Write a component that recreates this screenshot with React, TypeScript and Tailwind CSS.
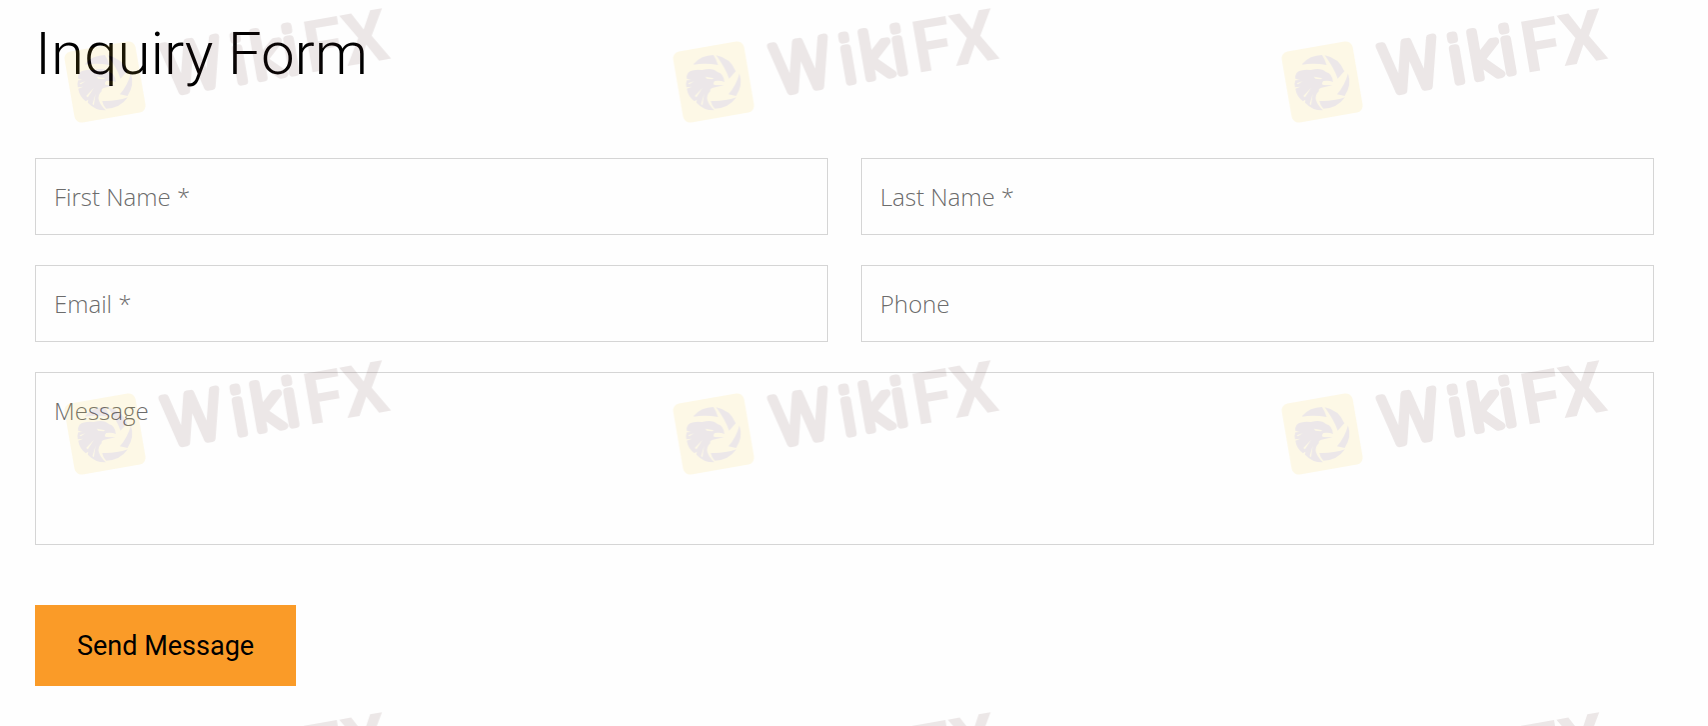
const fieldClass =
  "block w-full rounded-none border border-[#d5d5d5] bg-transparent px-[18px] font-['Open_Sans',sans-serif] text-[24px] leading-[33px] font-light text-black outline-none placeholder:text-[#6c6c6c] placeholder:opacity-100 focus:border-[#fa9b28]";

type FieldProps = { id: string; label: string; type?: string; required?: boolean };

function Field({ id, label, type = "text", required }: FieldProps) {
  return (
    <input
      id={id}
      name={id}
      type={type}
      required={required}
      aria-label={label}
      placeholder={required ? `${label} *` : label}
      className={`${fieldClass} py-[21px]`}
    />
  );
}

function Watermark() {
  return (
    <svg aria-hidden="true" className="pointer-events-none absolute inset-0 h-full w-full">
      <defs>
        <pattern id="watermark" width="608.6" height="352" patternUnits="userSpaceOnUse">
          <g opacity="0.11">
            <g transform="rotate(-9.8 105 82)">
              <rect x="69" y="46" width="72" height="72" rx="7" fill="#f4c61e" />
            </g>
            {/* Eagle head inside a shutter ring */}
            <g transform="translate(51.5 0) scale(0.3333)" fill="#552d3c">
              <path d="M101 191Q123 166 160 165Q168 176 174 195Q135 188 101 194Z" />
              <path d="M168 166Q211 174 227 214L207 236Q196 204 168 166Z" />
              <path d="M238 220Q250 256 228 288L205 283Q229 256 238 220Z" />
              <path d="M229 292Q205 326 164 326Q154 316 152 303Q190 305 229 292Z" />
              <path d="M84 218Q98 207 126 210Q158 202 172 216Q192 222 193 246Q180 240 164 243Q157 250 163 255L192 256Q176 259 156 264Q148 268 151 273Q138 285 142 300Q147 316 163 331Q131 332 109 308L110 299L103 304Q84 290 80 266L95 260L79 262Q76 252 80 241L92 240L80 236Q78 227 84 218Z" />
              <path
                d="M136 230L161 235L156 238L140 236ZM104 288L127 264L109 292ZM123 312L132 282L127 316ZM84 250L101 244L88 253Z"
                fill="#f4c61e"
              />
            </g>
            <g transform="translate(169 97) rotate(-9.8)" fill="#552a2a">
              <g
                stroke="#552a2a"
                strokeLinejoin="round"
                className="font-['DejaVu_Sans',sans-serif] font-extralight"
              >
                <text x="-3" y="-3" strokeWidth="7" className="text-[66px]">
                  W
                </text>
                <text x="67" y="-3" strokeWidth="8" className="text-[61px]">
                  iki
                </text>
              </g>
              <text x="141" y="0" className="font-[Roboto,sans-serif] text-[72px] font-bold">
                FX
              </text>
            </g>
          </g>
        </pattern>
      </defs>
      <rect width="100%" height="100%" fill="url(#watermark)" />
    </svg>
  );
}

export default function App() {
  return (
    <main className="relative min-h-screen overflow-hidden bg-[#fefefe] pt-[13px] pr-[54px] pb-[40px] pl-[35px]">
      <h1 className="font-[Roboto,sans-serif] text-[60px] leading-[82px] font-light text-black">
        Inquiry Form
      </h1>
      <form className="mt-[63px]" onSubmit={(event) => event.preventDefault()}>
        <div className="grid grid-cols-2 gap-x-[33px] gap-y-[30px]">
          <Field id="first-name" label="First Name" required />
          <Field id="last-name" label="Last Name" required />
          <Field id="email" label="Email" type="email" required />
          <Field id="phone" label="Phone" type="tel" />
          <textarea
            id="message"
            name="message"
            aria-label="Message"
            placeholder="Message"
            className={`${fieldClass} col-span-2 h-[173px] resize-none py-[21px]`}
          />
        </div>
        <button
          type="submit"
          className="mt-[60px] bg-[#fa9b28] px-[42px] pt-[26px] pb-[24px] font-[Roboto,sans-serif] text-[27px] leading-[31px] text-black"
        >
          Send Message
        </button>
      </form>
      <Watermark />
    </main>
  );
}
